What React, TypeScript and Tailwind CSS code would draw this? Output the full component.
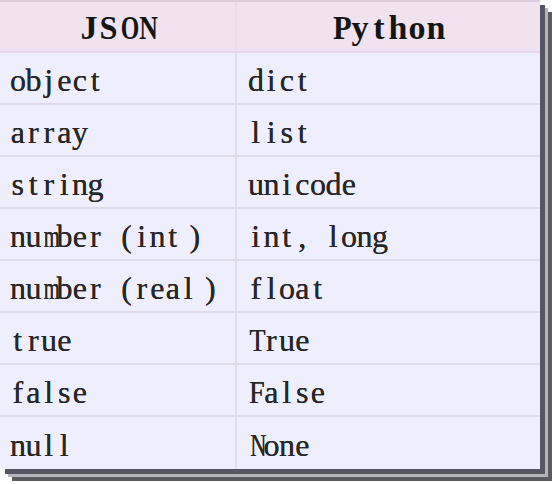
const rows: [string, string][] = [
  ["object", "dict"],
  ["array", "list"],
  ["string", "unicode"],
  ["number(int)", "int, long"],
  ["number(real)", "float"],
  ["true", "True"],
  ["false", "False"],
  ["null", "None"],
];

const serif = { fontFamily: '"Liberation Serif", "Noto Sans CJK SC", serif' };

// wide glyphs get squeezed into the fixed cell, like the bitmap font in the picture
const squeeze: Record<string, string> = {
  m: "scale-x-[0.64]",
  N: "scale-x-[0.7]",
  T: "scale-x-[0.82]",
  F: "scale-x-[0.88]",
};

const squeezeBold: Record<string, string> = {
  O: "scale-x-[0.7]",
  N: "scale-x-[0.76]",
  S: "scale-x-[0.95]",
  P: "scale-x-[0.9]",
};

function CellText({ text }: { text: string }) {
  return (
    <span
      className="flex whitespace-pre text-[32px] leading-none text-[#272727] [text-shadow:0_0_0.5px_#272727]"
      style={serif}
    >
      {Array.from(text).map((ch, i) => {
        if (ch === "(")
          return (
            <span key={i} className="inline-block w-[31px] text-right pr-[2px]">
              (
            </span>
          );
        if (ch === ")")
          return (
            <span key={i} className="inline-block w-[31px] text-left pl-[9px]">
              )
            </span>
          );
        return (
          <span key={i} className={"inline-block w-[15.5px] text-center " + (squeeze[ch] ?? "")}>
            {ch}
          </span>
        );
      })}
    </span>
  );
}

function HeadText({ text }: { text: string }) {
  return (
    <span className="flex text-[34px] leading-none font-bold text-[#151515]" style={serif}>
      {Array.from(text).map((ch, i) => (
        <span key={i} className={"inline-block w-[19px] text-center " + (squeezeBold[ch] ?? "")}>
          {ch}
        </span>
      ))}
    </span>
  );
}

export default function App() {
  return (
    <div className="w-[554px] h-[484px] bg-white overflow-hidden">
      <div className="w-[540px] border-t-2 border-[#dccbda] shadow-[5px_5px_0_#555563,8px_8px_0_#b4b4bc,12px_12px_0_#5a5a60]">
        <div className="grid grid-cols-[237px_1fr] h-[51px] bg-[#f1e2ef] border-b-2 border-[#e6d7ea]">
          <div className="flex items-center justify-center pt-[3px] border-r-2 border-[#e9dbe9]">
            <HeadText text="JSON" />
          </div>
          <div className="flex items-center justify-center pt-[3px]">
            <HeadText text="Python" />
          </div>
        </div>
        {rows.map(([json, py], i) => (
          <div
            key={json}
            className={
              "grid grid-cols-[237px_1fr] h-[52px] bg-[#efeefc] " +
              (i < rows.length - 1 ? "border-b-2 border-[#dfd9ec]" : "")
            }
          >
            <div className="flex items-center pl-[10px] pt-[4px] border-r-2 border-[#e2dcef]">
              <CellText text={json} />
            </div>
            <div className="flex items-center pl-[11px] pt-[4px]">
              <CellText text={py} />
            </div>
          </div>
        ))}
      </div>
    </div>
  );
}
